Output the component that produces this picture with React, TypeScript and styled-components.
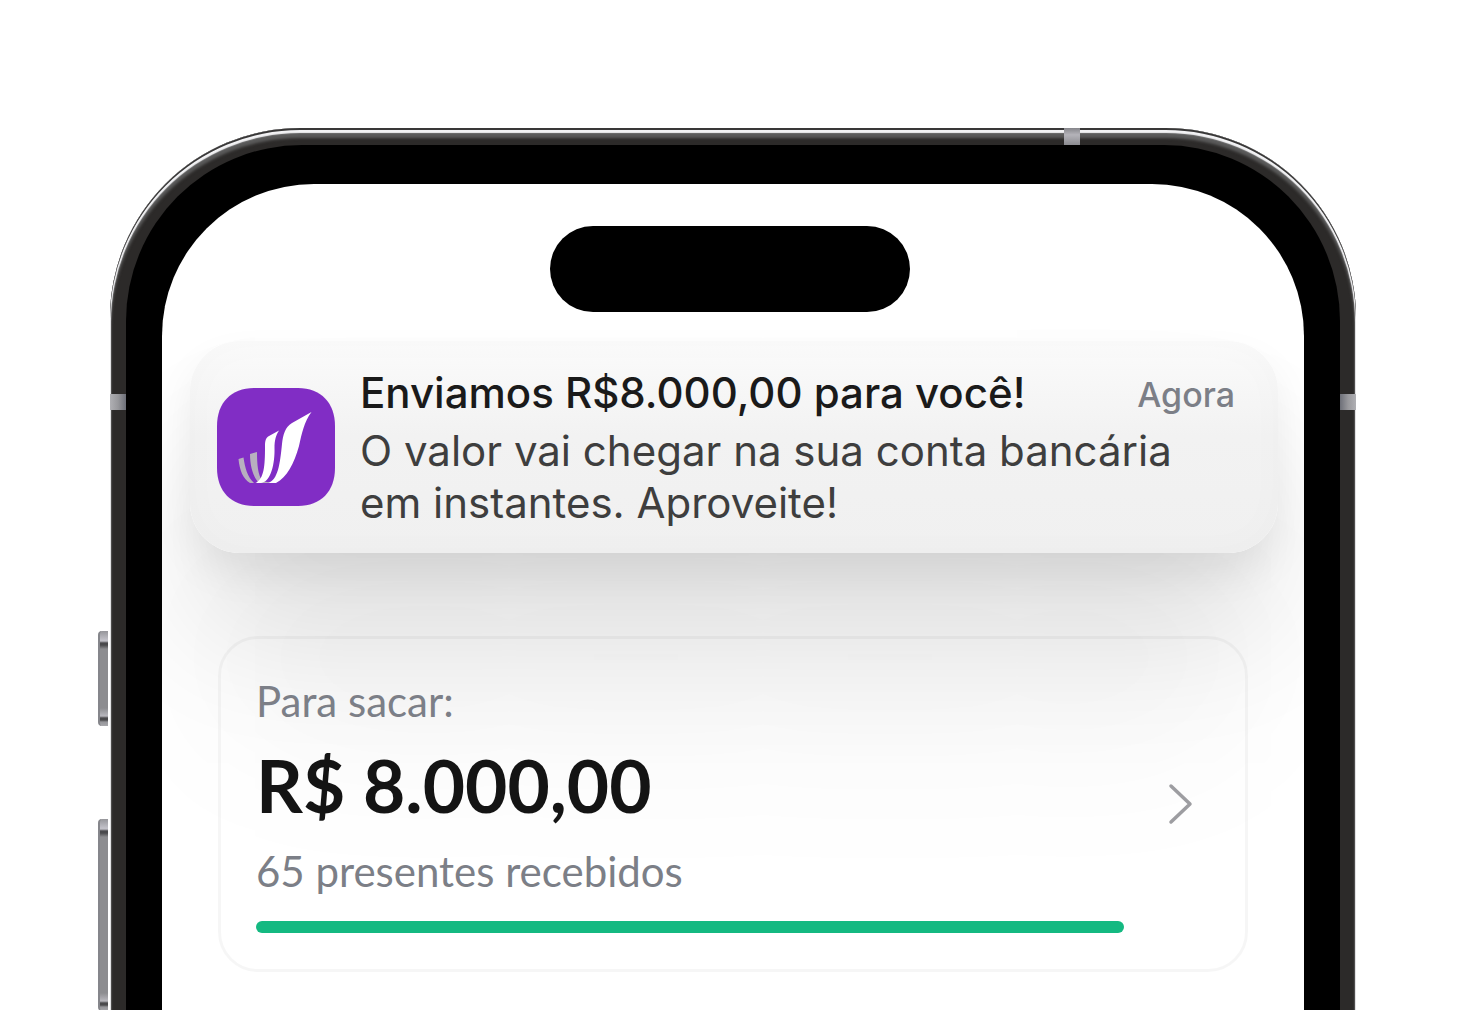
import React from "react";
import styled, { createGlobalStyle } from "styled-components";

const GlobalStyle = createGlobalStyle`
  *, *::before, *::after { box-sizing: border-box; }
  body { margin: 0; background: #fff; }
  h1, p { margin: 0; }
`;

const Page = styled.main`
  display: flex;
  height: 100vh;
  min-height: 900px;
  padding: 128px 110px 0;
  overflow: hidden;
`;

const Phone = styled.div`
  position: relative;
  flex: 1;
  min-width: 0;
  display: flex;
  padding: 17px 16px 0;
  border-radius: 190px 190px 0 0;
  background: #2c2a29;
  box-shadow:
    inset 0 2px 0 0 #393838,
    inset 0 4px 1px 1px #f2f2f4,
    inset 0 9px 3px 1px #5b5b5b;
`;

const Bezel = styled.div`
  flex: 1;
  min-width: 0;
  display: flex;
  padding: 39px 36px 0;
  border-radius: 176px 176px 0 0;
  background: #000;
`;

const Screen = styled.div`
  flex: 1;
  min-width: 0;
  display: flex;
  flex-direction: column;
  padding: 42px 26px 0 28px;
  border-radius: 152px 152px 0 0;
  background: #fff;
  overflow: hidden;
`;

const Island = styled.div`
  align-self: center;
  flex: none;
  width: 360px;
  height: 86px;
  margin-right: 8px;
  border-radius: 43px;
  background: #000;
`;

const Notification = styled.section`
  flex: none;
  display: flex;
  align-items: center;
  gap: 25px;
  height: 212px;
  margin-top: 29px;
  padding: 0 43px 0 27px;
  border-radius: 50px;
  background: linear-gradient(#fbfbfb, #f2f2f2 45%, #f0f0f0);
  box-shadow:
    inset 0 0 40px rgba(0, 0, 0, 0.02),
    0 20px 44px -4px rgba(0, 0, 0, 0.08),
    0 90px 130px -10px rgba(0, 0, 0, 0.11),
    0 210px 180px -30px rgba(0, 0, 0, 0.05);
`;

const AppIcon = styled.svg`
  flex: none;
  width: 118px;
  height: 118px;
`;

const Message = styled.div`
  flex: 1;
  min-width: 0;
  font-family: Inter, "Liberation Sans", sans-serif;
`;

const MessageHead = styled.div`
  display: flex;
  align-items: center;
  justify-content: space-between;
  height: 56px;
  margin-bottom: 4px;
`;

const Title = styled.h1`
  color: #1a1a1a;
  font-size: 42px;
  font-weight: 500;
  line-height: 56px;
  white-space: nowrap;
`;

const Time = styled.time`
  padding-top: 4px;
  color: #7c7f87;
  font-size: 34px;
  font-weight: 500;
  line-height: 52px;
`;

const Body = styled.p`
  color: #3e3e3e;
  font-size: 42px;
  line-height: 52px;
`;

const Balance = styled.section`
  flex: none;
  display: flex;
  align-items: center;
  gap: 42px;
  height: 336px;
  margin: 83px 30px 0 28px;
  padding: 0 49px 0 35px;
  border: 3px solid rgba(0, 0, 0, 0.035);
  border-radius: 40px;
  font-family: Lato, "Open Sans", sans-serif;
`;

const BalanceDetails = styled.div`
  flex: 1;
  min-width: 0;
`;

const Label = styled.p`
  color: #7c7f87;
  font-size: 42px;
  line-height: 52px;
`;

const Amount = styled.p`
  margin: 18px 0 20px;
  color: #141414;
  font-size: 73px;
  font-weight: 700;
  line-height: 80px;
  white-space: nowrap;
`;

const Track = styled.div`
  height: 12px;
  margin-top: 24px;
`;

const Fill = styled.div`
  height: 100%;
  border-radius: 6px;
  background: #14b981;
`;

const OpenButton = styled.button`
  flex: none;
  display: flex;
  padding: 0;
  border: 0;
  background: none;
  cursor: pointer;
`;

const SideKey = styled.span<{ $top: number; $height: number }>`
  position: absolute;
  top: ${(p) => p.$top}px;
  left: -12px;
  width: 10px;
  height: ${(p) => p.$height}px;
  border-left: 2px solid #85868b;
  border-radius: 4px 0 0 4px;
  background: linear-gradient(
    #96969a 0, #c2c1c8 9px, #c2c1c8 10px, #4a4a4c 12px, #4a4a4c 14px, #8d8d90 18px,
    #8d8d90 calc(100% - 18px), #b9b8be calc(100% - 10px), #4a4a4c calc(100% - 8px),
    #4a4a4c calc(100% - 6px), #96969a calc(100% - 4px), #a8a8ac
  );
`;

const Antenna = styled.span<{ $edge: "top" | "left" | "right" }>`
  position: absolute;
  ${(p) =>
    p.$edge === "top"
      ? "top: 0; right: 276px; width: 16px; height: 17px; background: linear-gradient(#85858a, #b4b3b9 40%, #8b8b90);"
      : `top: 266px; ${p.$edge}: 0; width: 16px; height: 16px;
         background: linear-gradient(to ${p.$edge}, #6d6f78, #98989c 50%, #b0b0b4);`}
`;

export default function App() {
  const progress = 100;
  return (
    <>
      <GlobalStyle />
      <Page>
        <Phone>
          <SideKey $top={503} $height={95} />
          <SideKey $top={691} $height={192} />
          <Antenna $edge="top" />
          <Antenna $edge="left" />
          <Antenna $edge="right" />
          <Bezel>
            <Screen>
              <Island />
              <Notification>
                <AppIcon viewBox="0 0 118 118" aria-hidden="true">
                  <path
                    fill="#812dc5"
                    d="M37 0H81C104 0 118 15 118 38V80C118 103 104 118 81 118H37C14 118 0 103 0 80V38C0 15 14 0 37 0Z"
                  />
                  <path fill="#b8afbf" d="M21.500 71L26.500 69.500C28 80 30.500 89 37 95H33C26 91 22.500 82 21.500 71Z" />
                  <path fill="#b8afbf" d="M33 66L40 64C40 77 41 86 45 93L55 95H42C36 89 33 78 33 66Z" />
                  <path fill="#fff" d="M62 42.500L52 48C48.500 50 48 53 48 59C48 78 47 91 38.500 95H44C54 94 58 75 57.500 60C57.500 52 59 47 62 42.500Z" />
                  <path fill="#fff" d="M94.500 24L75 35C68 39 66 47 65 56C63 76 61 92 51 95H59C70 89 77 76 82 58C85 45 87 34 94.500 24Z" />
                </AppIcon>
                <Message>
                  <MessageHead>
                    <Title>Enviamos R$8.000,00 para você!</Title>
                    <Time>Agora</Time>
                  </MessageHead>
                  <Body>O valor vai chegar na sua conta bancária em instantes. Aproveite!</Body>
                </Message>
              </Notification>
              <Balance>
                <BalanceDetails>
                  <Label>Para sacar:</Label>
                  <Amount>R$ 8.000,00</Amount>
                  <Label>65 presentes recebidos</Label>
                  <Track role="progressbar" aria-label="Presentes recebidos" aria-valuenow={progress}>
                    <Fill style={{ width: `${progress}%` }} />
                  </Track>
                </BalanceDetails>
                <OpenButton type="button" aria-label="Abrir saldo">
                  <svg width="30" height="44" viewBox="0 0 30 44" fill="none" stroke="#9d9da1" strokeWidth="3.500" strokeLinecap="round" strokeLinejoin="round">
                    <path d="M5 4L24 22L5 40" />
                  </svg>
                </OpenButton>
              </Balance>
            </Screen>
          </Bezel>
        </Phone>
      </Page>
    </>
  );
}
